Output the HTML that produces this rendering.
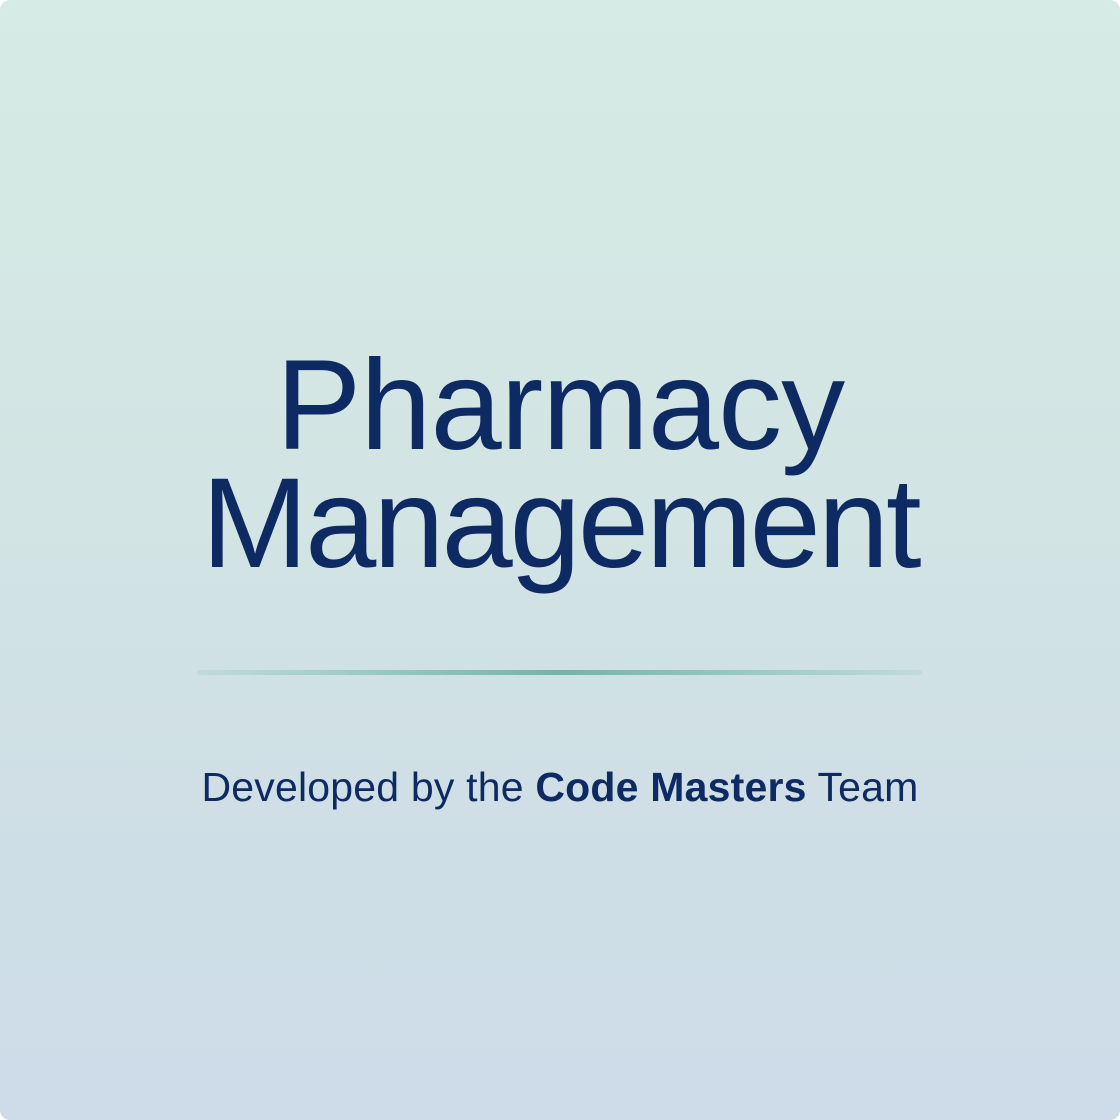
<!DOCTYPE html>
<html><head><meta charset="utf-8"><style>
html,body{margin:0;padding:0;width:1120px;height:1120px;background:#fff;overflow:hidden}
.card{position:absolute;left:0;top:0;width:1120px;height:1120px;border-radius:10px;
background:linear-gradient(180deg,#d6ebe5 0%,#d2e4e3 45%,#cfdfe5 70%,#cddce8 100%);}
.t{position:absolute;left:0;width:1120px;text-align:center;color:#0e2a62;font-family:"Liberation Sans",sans-serif;white-space:nowrap}
.t1{top:336px;font-size:128px;line-height:140px;letter-spacing:-1px}
.t2{top:454px;font-size:128px;line-height:140px;letter-spacing:-3px}
.line{position:absolute;left:197px;top:670px;width:725px;height:5px;border-radius:3px;
background:linear-gradient(90deg,rgba(110,180,170,0.15),#6fb5a9 50%,rgba(110,180,170,0.15))}
.sub{top:762px;font-size:41px;line-height:50px;letter-spacing:0.2px}
.sub b{font-weight:bold}
</style></head><body>
<div class="card"></div>
<div class="t t1">Pharmacy</div>
<div class="t t2">Management</div>
<div class="line"></div>
<div class="t sub">Developed by the <b>Code Masters</b> Team</div>
</body></html>
